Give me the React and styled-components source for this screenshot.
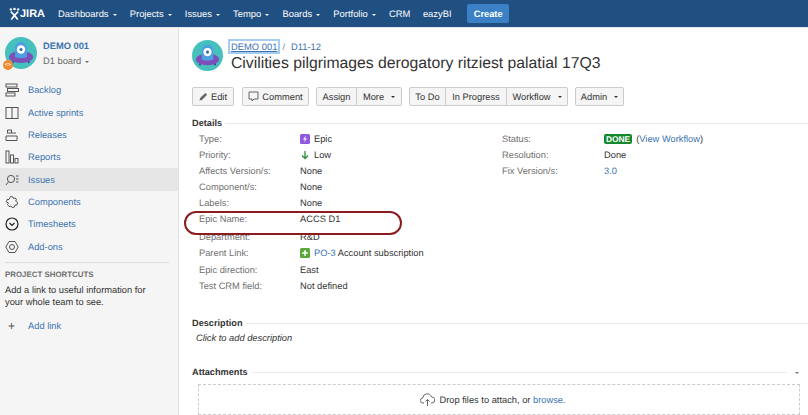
import styled, { createGlobalStyle } from "styled-components";

const GlobalStyle = createGlobalStyle`
  html, body {
    margin: 0;
    padding: 0;
    background: #fff;
  }
  body {
    font-family: "Liberation Sans", Arial, sans-serif;
    font-size: 9.3px;
    color: #333;
    text-rendering: geometricPrecision;
  }
  a {
    color: #3b73af;
    text-decoration: none;
  }
`;

const navItems = [
  { label: "Dashboards", caret: true },
  { label: "Projects", caret: true },
  { label: "Issues", caret: true },
  { label: "Tempo", caret: true },
  { label: "Boards", caret: true },
  { label: "Portfolio", caret: true },
  { label: "CRM" },
  { label: "eazyBI" },
];

const sideItems = [
  { label: "Backlog", icon: "backlog" },
  { label: "Active sprints", icon: "sprints" },
  { label: "Releases", icon: "releases" },
  { label: "Reports", icon: "reports" },
  { label: "Issues", icon: "issues", active: true },
  { label: "Components", icon: "components" },
  { label: "Timesheets", icon: "timesheets" },
  { label: "Add-ons", icon: "addons" },
];

const ProjectAvatar = ({ size }) => (
  <svg width={size} height={size} viewBox="0 0 32 32">
    <circle cx="16" cy="16" r="16" fill="#45c0bd" />
    <path d="M9 23l-1 3M23 23l1 3" stroke="#4a2d8f" strokeWidth="1.6" />
    <ellipse cx="16" cy="20" rx="12" ry="6" fill="#7d4fb8" />
    <path d="M10 20V11a6 6 0 0 1 12 0v9c-3 1.6-9 1.6-12 0z" fill="#4f9fe0" />
    <circle cx="16" cy="12.5" r="4.2" fill="#fff" />
    <circle cx="16" cy="12.5" r="1.6" fill="#2d6fa8" />
  </svg>
);

const SideIcon = ({ name }) => {
  const common = { fill: "none", stroke: "#555", strokeWidth: 1 };
  return (
    <svg width="14" height="14" viewBox="0 0 14 14">
      {name === "backlog" && (
        <g {...common}>
          <rect x="1" y="1" width="11" height="3" />
          <rect x="2.5" y="5.5" width="11" height="3" />
          <rect x="1" y="10" width="9" height="3" />
        </g>
      )}
      {name === "sprints" && (
        <g {...common}>
          <rect x="1" y="1.5" width="12" height="11" />
          <path d="M7 1.5v11" />
        </g>
      )}
      {name === "releases" && (
        <g {...common}>
          <path d="M2.5 5V2h4v3M2 5h9M1 8h11M1 8v4.5h11V8" />
        </g>
      )}
      {name === "reports" && (
        <g {...common}>
          <rect x="1" y="1" width="3" height="12" />
          <rect x="5.5" y="5" width="3" height="8" />
          <rect x="10" y="8.5" width="3" height="4.5" />
        </g>
      )}
      {name === "issues" && (
        <g {...common}>
          <circle cx="6" cy="6" r="3.6" />
          <path d="M3.4 8.8L1 12M11 3h2.5M11 6h2.5M11 9h2.5" />
        </g>
      )}
      {name === "components" && (
        <path
          {...common}
          d="M5.5 1.5l2.5.5.5 1.5 2-.5 1 2-1 1 2 1.5-.5 2.5-2 0-.5 2-2.5.5-1-1.5-2 .5-1.5-2 1-1.5-2-1 .5-2.5 2 0z"
        />
      )}
      {name === "timesheets" && (
        <g fill="none" stroke="#222" strokeWidth="1.2">
          <circle cx="7" cy="7" r="6" />
          <path d="M4.5 6L7 8.5 9.5 6" />
        </g>
      )}
      {name === "addons" && (
        <g {...common}>
          <path d="M4 1.5h6L13.2 7 10 12.5H4L.8 7z" />
          <circle cx="7" cy="7" r="2.5" />
        </g>
      )}
    </svg>
  );
};

const Page = styled.div`
  width: 808px;
  height: 415px;
  position: relative;
  overflow: hidden;
  background: #fff;
`;

const TopBar = styled.header`
  height: 27px;
  background: #205081;
  display: flex;
  align-items: center;
  padding-left: 9px;
`;

const Logo = styled.div`
  display: flex;
  align-items: center;
  gap: 0;
  width: 49px;
  color: #fff;
  font-size: 11px;
  font-weight: 700;
`;

const TopNav = styled.nav`
  display: flex;
  align-items: center;
`;

const TopLink = styled.a`
  color: #fff;
  font-size: 9.4px;
  margin-right: ${(p) => (p.$caret ? "13.2px" : "12.6px")};
  white-space: nowrap;
`;

const Caret = styled.span`
  display: inline-block;
  width: 0;
  height: 0;
  margin-left: 4px;
  vertical-align: 1.5px;
  border-left: 2px solid transparent;
  border-right: 2px solid transparent;
  border-top: 2.5px solid ${(p) => p.$color || "currentColor"};
`;

const CreateButton = styled.button`
  width: 42px;
  height: 19px;
  margin-left: 3px;
  padding: 0;
  border: 0;
  border-radius: 2px;
  background: #3b7fc4;
  color: #fff;
  font: 700 9.3px "Liberation Sans", Arial, sans-serif;
  text-rendering: geometricPrecision;
`;

const Body = styled.div`
  display: flex;
  height: 388px;
  border-top: 1px solid #e9e9e9;
`;

const Sidebar = styled.aside`
  width: 179px;
  flex: none;
  box-sizing: border-box;
  background: #f5f5f5;
  border-right: 1px solid #e0e0e0;
`;

const SideHeader = styled.div`
  display: flex;
  gap: 6px;
  padding: 9px 0 0 5px;
  height: 42px;
  position: relative;
`;

const Badge = styled.span`
  position: absolute;
  left: 3px;
  top: 32px;
  width: 10px;
  height: 10px;
  border-radius: 50%;
  background: #f0882e;
  color: #fff;
  font-size: 5px;
  font-weight: 700;
  line-height: 10px;
  text-align: center;
`;

const ProjectText = styled.div`
  padding-top: 3px;
`;

const ProjectName = styled.a`
  display: block;
  font-size: 9.3px;
  font-weight: 700;
  line-height: 12px;
  margin-bottom: 2px;
`;

const BoardName = styled.div`
  color: #666;
  font-size: 9.3px;
  line-height: 14px;
`;

const SideNav = styled.div`
  margin-top: 0;
`;

const SideRow = styled.a`
  display: flex;
  align-items: center;
  height: 22.35px;
  padding-left: 5px;
  gap: 9px;
  font-size: 9.3px;
  background: ${(p) => (p.$active ? "#e6e6e6" : "transparent")};
`;

const Divider = styled.div`
  height: 1px;
  margin: 4px 9px 0 5px;
  background: #ddd;
`;

const ShortcutTitle = styled.h4`
  margin: 7px 0 0 5px;
  color: #707070;
  font-size: 7.9px;
  line-height: 10px;
`;

const ShortcutText = styled.p`
  margin: 4px 0 0 5px;
  width: 160px;
  font-size: 9.3px;
  line-height: 12.5px;
  color: #333;
`;

const AddLink = styled.a`
  display: flex;
  align-items: center;
  gap: 13px;
  margin: 10px 0 0 8px;
  font-size: 9.3px;
  line-height: 14px;
`;

const Plus = styled.span`
  color: #555;
  font-size: 12px;
  line-height: 14px;
`;

const Main = styled.main`
  flex: 1;
  min-width: 0;
  padding: 12px 0 0 13px;
`;

const IssueHeader = styled.div`
  display: flex;
  gap: 8px;
`;

const Breadcrumbs = styled.div`
  display: flex;
  align-items: center;
  font-size: 9.4px;
  line-height: 13px;
`;

const FocusLink = styled.a`
  color: #3b73af;
  text-decoration: underline;
  outline: 2px solid #a5cdf3;
  outline-offset: -1px;
  padding: 0 2px;
  margin-left: -2px;
`;

const Slash = styled.span`
  color: #888;
  margin: 0 6px 0 3px;
`;

const Title = styled.h1`
  margin: 0;
  font-size: 15.75px;
  font-weight: 400;
  line-height: 21px;
  color: #333;
  white-space: nowrap;
`;

const Toolbar = styled.div`
  display: flex;
  gap: 7px;
  margin-top: 13px;
`;

const ButtonGroup = styled.div`
  display: flex;
`;

const Button = styled.button`
  display: flex;
  align-items: center;
  justify-content: center;
  gap: 3px;
  box-sizing: border-box;
  width: ${(p) => p.$width}px;
  height: 19px;
  padding: 0;
  margin-left: ${(p) => (p.$joined ? "-1px" : "0")};
  margin-right: ${(p) => p.$after || 0}px;
  border: 1px solid #ccc;
  border-radius: ${(p) => p.$radius || "2px"};
  background: #f5f5f5;
  color: #333;
  font: 9.3px "Liberation Sans", Arial, sans-serif;
  text-rendering: geometricPrecision;
  white-space: nowrap;
`;

const SectionHead = styled.div`
  display: flex;
  align-items: center;
  gap: 3px;
  margin-top: ${(p) => p.$top}px;
  font-size: 9.2px;
  font-weight: 700;
  line-height: 12px;
  color: #333;
  &::after {
    content: "";
    flex: 1;
    height: 1px;
    background: #ececec;
  }
`;

const SectionToggle = styled.span`
  order: 2;
  margin: 0 9px 0 1px;
  line-height: 8px;
  color: #777;
`;

const Details = styled.div`
  display: grid;
  grid-template-columns: 303px 1fr;
  margin-top: 2px;
  padding-left: 7px;
`;

const FieldList = styled.div`
  display: flex;
  flex-direction: column;
`;

const Field = styled.div`
  display: grid;
  grid-template-columns: ${(p) => p.$label}px 1fr;
  height: 16px;
  align-items: center;
  white-space: nowrap;
  font-size: 9.3px;
  &:nth-child(7) {
    margin-top: 2px;
  }
  &:nth-child(n + 8) {
    height: 16.4px;
  }
`;

const Label = styled.span`
  color: #707070;
`;

const Value = styled.div`
  display: flex;
  align-items: center;
  gap: 4px;
  color: #333;
`;

const Lozenge = styled.span`
  background: #14892c;
  color: #fff;
  border-radius: 2px;
  padding: 0 2px;
  font-size: 8.4px;
  font-weight: 700;
  line-height: 10px;
`;

const ClickText = styled.div`
  margin: 3px 0 0 4px;
  font-size: 9.3px;
  font-style: italic;
  line-height: 12px;
  color: #333;
`;

const DropZone = styled.div`
  display: flex;
  align-items: center;
  justify-content: center;
  gap: 4px;
  box-sizing: border-box;
  margin: 6px 8px 0 6px;
  padding-right: 12px;
  height: 31px;
  border: 1px dashed #ccc;
  font-size: 9.3px;
`;

const Annotation = styled.div`
  position: absolute;
  left: 184px;
  top: 211px;
  width: 218px;
  height: 24px;
  box-sizing: border-box;
  border: 2px solid #8c1c20;
  border-radius: 12px;
`;

const leftFields = [
  ["Type:", <><svg width="10" height="10" viewBox="0 0 10 10"><rect width="10" height="10" rx="1.5" fill="#8f5ae0" /><path d="M6 1.5L3 5.5h2L4 8.5l3-4H5z" fill="#fff" /></svg><span>Epic</span></>],
  ["Priority:", <><svg width="10" height="10" viewBox="0 0 10 10"><path d="M5 1v7.5M2 5.5l3 3 3-3" fill="none" stroke="#2d8a3e" strokeWidth="1.3" /></svg><span>Low</span></>],
  ["Affects Version/s:", "None"],
  ["Component/s:", "None"],
  ["Labels:", "None"],
  ["Epic Name:", "ACCS D1"],
  ["Department:", "R&D"],
  ["Parent Link:", <><svg width="10" height="10" viewBox="0 0 10 10"><rect width="10" height="10" rx="1.5" fill="#5aa83d" /><path d="M5 2.2v5.6M2.2 5h5.6" stroke="#fff" strokeWidth="1.6" /></svg><span><a href="#">PO-3</a> Account subscription</span></>],
  ["Epic direction:", "East"],
  ["Test CRM field:", "Not defined"],
];

const rightFields = [
  ["Status:", <><Lozenge>DONE</Lozenge><span>(<a href="#">View Workflow</a>)</span></>],
  ["Resolution:", "Done"],
  ["Fix Version/s:", <a href="#">3.0</a>],
];

const App = () => {
  return (
    <Page>
      <GlobalStyle />
      <TopBar>
        <Logo>
          <svg width="11" height="14" viewBox="0 0 12 14">
            <circle cx="2" cy="2" r="1.3" fill="#fff" />
            <circle cx="6" cy="1.6" r="1.4" fill="#fff" />
            <circle cx="10" cy="2" r="1.3" fill="#fff" />
            <path d="M2 4.5l4 4 4-4M6 8.5L2.5 13M6 8.5L9.5 13" fill="none" stroke="#fff" strokeWidth="1.8" />
          </svg>
          <span>JIRA</span>
        </Logo>
        <TopNav>
          {navItems.map((item) => (
            <TopLink key={item.label} href="#" $caret={item.caret}>
              {item.label}
              {item.caret && <Caret />}
            </TopLink>
          ))}
          <CreateButton>Create</CreateButton>
        </TopNav>
      </TopBar>
      <Body>
        <Sidebar>
          <SideHeader>
            <ProjectAvatar size={32} />
            <Badge>&lt;&gt;</Badge>
            <ProjectText>
              <ProjectName href="#">DEMO 001</ProjectName>
              <BoardName>
                D1 board
                <Caret />
              </BoardName>
            </ProjectText>
          </SideHeader>
          <SideNav>
            {sideItems.map((item) => (
              <SideRow key={item.label} href="#" $active={item.active}>
                <SideIcon name={item.icon} />
                {item.label}
              </SideRow>
            ))}
          </SideNav>
          <Divider />
          <ShortcutTitle>PROJECT SHORTCUTS</ShortcutTitle>
          <ShortcutText>Add a link to useful information for your whole team to see.</ShortcutText>
          <AddLink href="#">
            <Plus>+</Plus>
            Add link
          </AddLink>
        </Sidebar>
        <Main>
          <IssueHeader>
            <ProjectAvatar size={31} />
            <div>
              <Breadcrumbs>
                <FocusLink href="#">DEMO 001</FocusLink>
                <Slash>/</Slash>
                <a href="#">D11-12</a>
              </Breadcrumbs>
              <Title>Civilities pilgrimages derogatory ritziest palatial 17Q3</Title>
            </div>
          </IssueHeader>
          <Toolbar>
            <Button $width={42} $after={1}>
              <svg width="9" height="9" viewBox="0 0 9 9">
                <path d="M0.5 8.5l.6-2.4L6.3.9l1.8 1.8-5.2 5.2z" fill="#666" />
              </svg>
              Edit
            </Button>
            <Button $width={67}>
              <svg width="11" height="11" viewBox="0 0 11 11">
                <path d="M1 1h9v7H6L4 10V8H1z" fill="none" stroke="#666" />
              </svg>
              Comment
            </Button>
            <ButtonGroup>
              <Button $width={41} $radius="2px 0 0 2px">Assign</Button>
              <Button $width={46} $joined $radius="0 2px 2px 0">
                More
                <Caret />
              </Button>
            </ButtonGroup>
            <ButtonGroup>
              <Button $width={37} $radius="2px 0 0 2px">To Do</Button>
              <Button $width={62} $joined $radius="0">In Progress</Button>
              <Button $width={62} $joined $radius="0 2px 2px 0">
                Workflow
                <Caret />
              </Button>
            </ButtonGroup>
            <Button $width={49}>
              Admin
              <Caret />
            </Button>
          </Toolbar>
          <SectionHead $top={11}>Details</SectionHead>
          <Details>
            <FieldList>
              {leftFields.map(([label, value]) => (
                <Field key={label} $label={101}>
                  <Label>{label}</Label>
                  <Value>{value}</Value>
                </Field>
              ))}
            </FieldList>
            <FieldList>
              {rightFields.map(([label, value]) => (
                <Field key={label} $label={102}>
                  <Label>{label}</Label>
                  <Value>{value}</Value>
                </Field>
              ))}
            </FieldList>
          </Details>
          <SectionHead $top={23}>Description</SectionHead>
          <ClickText>Click to add description</ClickText>
          <SectionHead $top={22}>
            Attachments
            <SectionToggle>
              <Caret />
            </SectionToggle>
          </SectionHead>
          <DropZone>
            <svg width="15" height="14" viewBox="0 0 15 14">
              <path d="M4 10H3a2.5 2.5 0 0 1-.3-5A4.5 4.5 0 0 1 11.5 4 3 3 0 0 1 12 10h-1M7.5 13V6.5M5.5 8.5l2-2 2 2" fill="none" stroke="#666" />
            </svg>
            <span>
              Drop files to attach, or <a href="#">browse.</a>
            </span>
          </DropZone>
        </Main>
      </Body>
      <Annotation />
    </Page>
  );
};

export default App;
